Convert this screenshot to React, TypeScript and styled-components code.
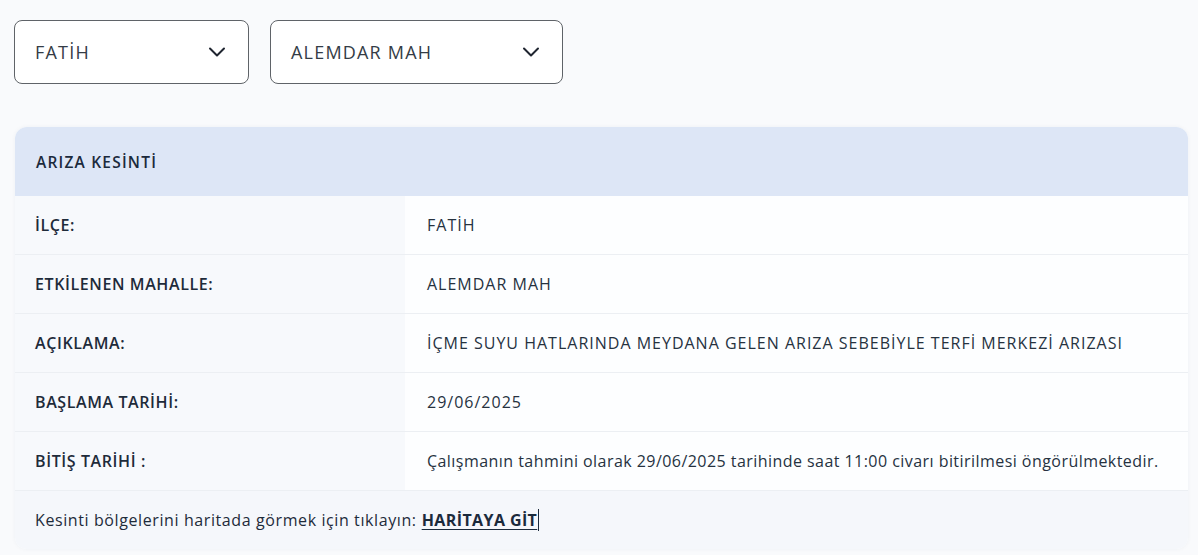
import React from "react";
import styled, { createGlobalStyle } from "styled-components";

const GlobalStyle = createGlobalStyle`
  html, body {
    margin: 0;
    padding: 0;
    background: #f9fafc;
  }
  body {
    font-family: "Open Sans", "Liberation Sans", sans-serif;
    color: #1e2b3a;
  }
`;

const Page = styled.div`
  width: 1198px;
  height: 555px;
  box-sizing: border-box;
  padding: 20px 10px 0 14px;
  display: flex;
  flex-direction: column;
  gap: 43px;
`;

const Filters = styled.div`
  display: flex;
  gap: 21px;
`;

const Select = styled.div<{ $width: number }>`
  width: ${(p) => p.$width}px;
  height: 64px;
  box-sizing: border-box;
  border: 1px solid #5f6368;
  border-radius: 8px;
  background: #ffffff;
  display: flex;
  align-items: center;
  justify-content: space-between;
  padding: 0 22px 0 20px;
  font-size: 18px;
  letter-spacing: 1.2px;
  color: #343c46;
`;

const Chevron = () => (
  <svg width="18" height="12" viewBox="0 0 18 12" fill="none">
    <path d="M2 2.5 L9 9.5 L16 2.5" stroke="#1f2530" strokeWidth="2" strokeLinecap="round" strokeLinejoin="round" />
  </svg>
);

const Card = styled.div`
  margin-left: 1px;
  width: 1173px;
  border-radius: 12px;
  overflow: hidden;
  background: #fdfeff;
  box-shadow: 0 0 4px rgba(30, 50, 90, 0.05);
`;

const Header = styled.div`
  height: 69px;
  background: #dde6f6;
  display: flex;
  align-items: center;
  padding-left: 21px;
  font-size: 15.5px;
  font-weight: 600;
  letter-spacing: 1.2px;
  color: #1b2a3c;
`;

const Row = styled.div`
  display: grid;
  grid-template-columns: 390px 1fr;
  height: 59px;
  border-bottom: 1px solid #eceff3;
  box-sizing: border-box;
`;

const Label = styled.div`
  background: #f7f9fc;
  display: flex;
  align-items: center;
  padding-left: 20px;
  font-size: 16px;
  font-weight: 600;
  letter-spacing: 0.6px;
  color: #1e2b3a;
`;

const Value = styled.div<{ $caps?: boolean }>`
  background: #fdfeff;
  display: flex;
  align-items: center;
  padding-left: 22px;
  font-size: 16px;
  letter-spacing: ${(p) => (p.$caps ? "1px" : "0.45px")};
  color: #26323f;
`;

const Footer = styled.div`
  height: 58px;
  background: #f5f7fb;
  display: flex;
  align-items: center;
  padding-left: 20px;
  font-size: 16px;
  letter-spacing: 0.6px;
  color: #1e2b3a;
`;

const MapLink = styled.a`
  margin-left: 5px;
  font-weight: 700;
  letter-spacing: 0.4px;
  color: #1b2a3c;
  text-decoration: underline;
  text-underline-offset: 3px;
  border-right: 1px solid #1b2a3c;
  padding-right: 1px;
`;

const rows: [string, string, boolean][] = [
  ["İLÇE:", "FATİH", true],
  ["ETKİLENEN MAHALLE:", "ALEMDAR MAH", true],
  ["AÇIKLAMA:", "İÇME SUYU HATLARINDA MEYDANA GELEN ARIZA SEBEBİYLE TERFİ MERKEZİ ARIZASI", true],
  ["BAŞLAMA TARİHİ:", "29/06/2025", true],
  ["BİTİŞ TARİHİ :", "Çalışmanın tahmini olarak 29/06/2025 tarihinde saat 11:00 civarı bitirilmesi öngörülmektedir.", false],
];

export default function App() {
  return (
    <>
      <GlobalStyle />
      <Page>
        <Filters>
          <Select $width={235}>
            <span>FATİH</span>
            <Chevron />
          </Select>
          <Select $width={293}>
            <span>ALEMDAR MAH</span>
            <Chevron />
          </Select>
        </Filters>
        <Card>
          <Header>ARIZA KESİNTİ</Header>
          {rows.map(([label, value, caps]) => (
            <Row key={label}>
              <Label>{label}</Label>
              <Value $caps={caps}>{value}</Value>
            </Row>
          ))}
          <Footer>
            Kesinti bölgelerini haritada görmek için tıklayın:
            <MapLink href="#">HARİTAYA GİT</MapLink>
          </Footer>
        </Card>
      </Page>
    </>
  );
}
